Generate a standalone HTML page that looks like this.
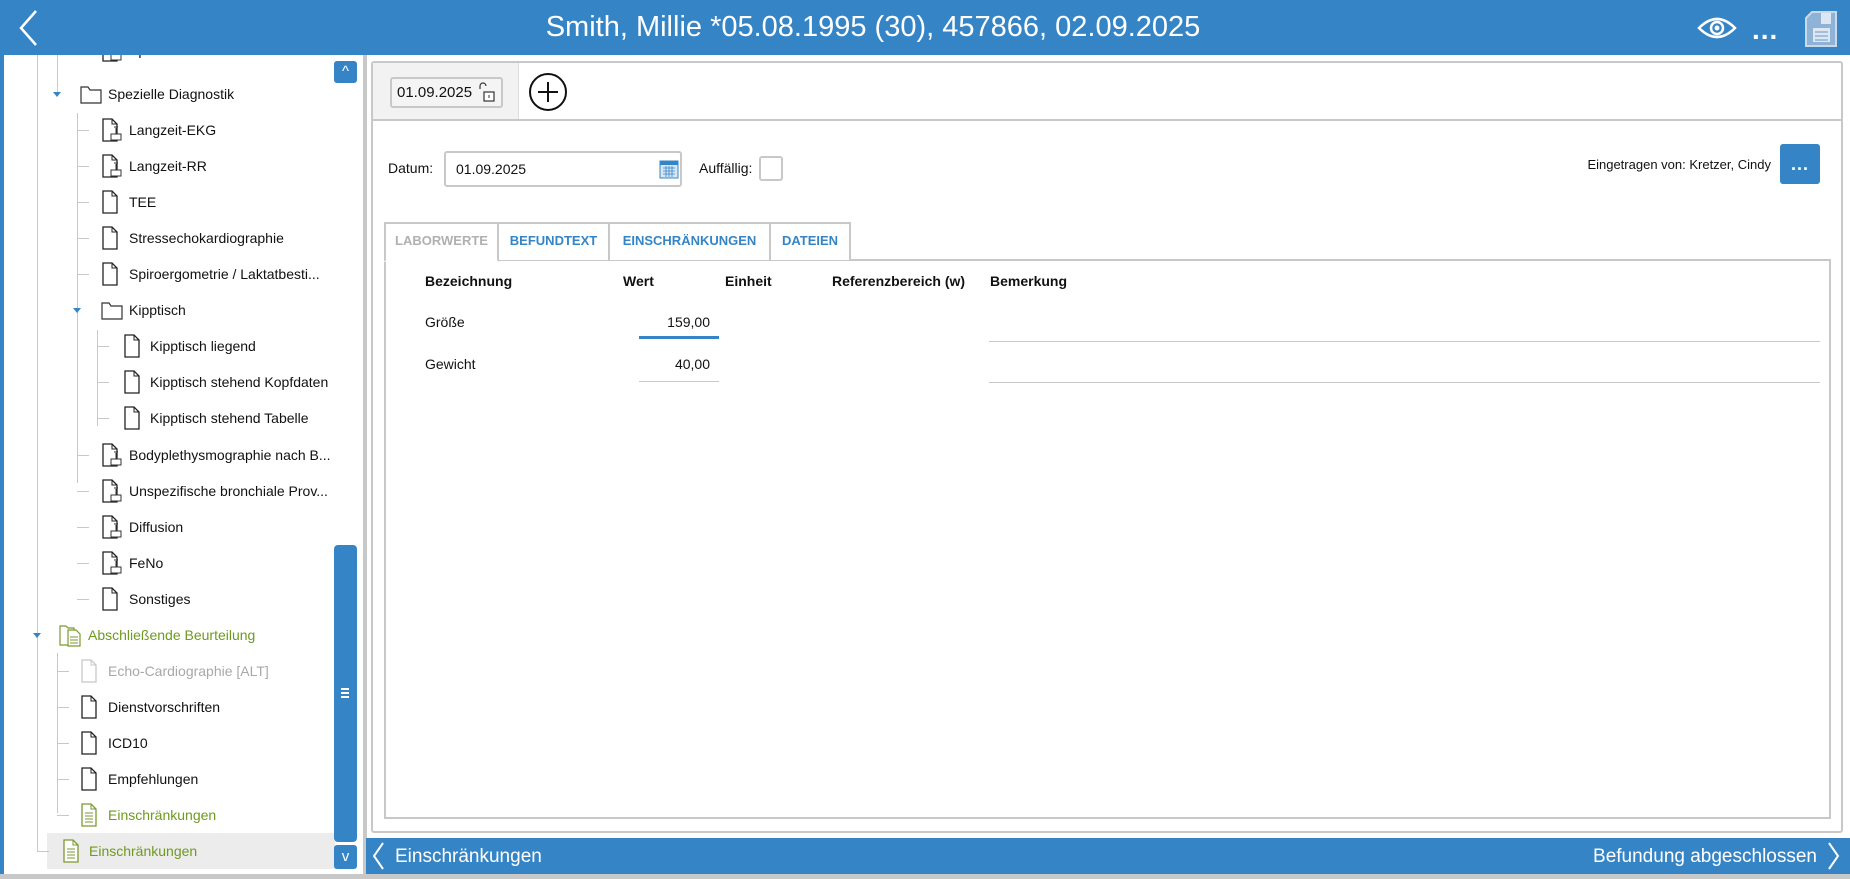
<!DOCTYPE html>
<html><head><meta charset="utf-8"><style>
*{margin:0;padding:0;box-sizing:border-box}
body{width:1850px;height:879px;overflow:hidden;background:#fff;font-family:"Liberation Sans",sans-serif;color:#111;position:relative}
.a{position:absolute}
.hdr{left:0;top:0;width:1850px;height:55px;background:#3585c6;z-index:5}
.title{left:0;width:1746px;top:8px;text-align:center;color:#fff;font-size:29px;line-height:38px;z-index:6}
.t{position:absolute;font-size:14px;line-height:18px;white-space:nowrap}
.ic{position:absolute}
.vl{position:absolute;width:1px;background:#c8c8c8}
.hl{position:absolute;height:1px;background:#c8c8c8;width:12px}
.arr{position:absolute;width:0;height:0;border-left:4px solid transparent;border-right:4px solid transparent;border-top:5px solid #3585c6}
.tab{position:absolute;top:222px;height:38px;border:2px solid #c8c8c8;border-bottom:none;font-size:13px;font-weight:bold;color:#3585c6;text-align:center;line-height:34px;background:#fff}
.th{position:absolute;top:273px;font-size:14px;font-weight:bold}
.z{z-index:6}
</style></head><body>
<div class="a hdr"></div>
<svg class="a z" style="left:16px;top:9px" width="24" height="38"><path d="M20 2 L5 19 L20 36" stroke="#fff" stroke-width="2.5" fill="none"/></svg>
<div class="a title">Smith, Millie *05.08.1995 (30), 457866, 02.09.2025</div>
<svg class="a z" style="left:1697px;top:16px" width="40" height="24"><path d="M2 12 Q20 -6 38 12 Q20 30 2 12Z" stroke="#fff" stroke-width="2.5" fill="none"/><circle cx="20" cy="12" r="6" stroke="#fff" stroke-width="2.5" fill="none"/><circle cx="20" cy="12" r="2.5" fill="#fff"/></svg>
<div class="a z" style="left:1752px;top:14px;color:#fff;font-size:28px;font-weight:bold;letter-spacing:1px">...</div>
<svg class="a z" style="left:1803px;top:10px" width="36" height="38"><path d="M3 8 L9 2 L33 2 L33 36 L3 36Z" fill="#8fb3d6" stroke="#c9d9ea" stroke-width="2"/><rect x="18" y="3" width="10" height="11" fill="#dce7f2"/><rect x="10" y="18" width="17" height="14" fill="#dce7f2"/><path d="M12 22h13M12 26h13M12 30h13" stroke="#8fb3d6" stroke-width="1.5"/></svg>

<!-- left panel -->
<div class="a" style="left:0;top:55px;width:4px;height:824px;background:#3585c6"></div>
<div class="a" style="left:363px;top:55px;width:4px;height:824px;background:#c8c8c8"></div>
<div class="a" style="left:0;top:874px;width:1850px;height:5px;background:#c8c8c8"></div>
<div class="a" style="left:47px;top:833px;width:288px;height:36px;background:#ececec"></div>

<div class="vl" style="left:37px;top:55px;height:796px"></div>
<div class="vl" style="left:57px;top:55px;height:40px"></div>
<div class="vl" style="left:77px;top:113px;height:370px"></div>
<div class="vl" style="left:97px;top:330px;height:96px"></div>
<div class="vl" style="left:57px;top:653px;height:160px"></div>

<div id="tree"></div>
<script>
var rows=[
[50,"Spirometrie",2,"m"],
[94,"Spezielle Diagnostik",1,"f",1],
[130,"Langzeit-EKG",2,"m"],
[166,"Langzeit-RR",2,"m"],
[202,"TEE",2,"p"],
[238,"Stressechokardiographie",2,"p"],
[274,"Spiroergometrie / Laktatbesti...",2,"p"],
[310,"Kipptisch",2,"f",1],
[346,"Kipptisch liegend",3,"p"],
[382,"Kipptisch stehend Kopfdaten",3,"p"],
[418,"Kipptisch stehend Tabelle",3,"p"],
[455,"Bodyplethysmographie nach B...",2,"m"],
[491,"Unspezifische bronchiale Prov...",2,"m"],
[527,"Diffusion",2,"m"],
[563,"FeNo",2,"m"],
[599,"Sonstiges",2,"p"],
[635,"Abschließende Beurteilung",0,"g",1],
[671,"Echo-Cardiographie [ALT]",1,"d"],
[707,"Dienstvorschriften",1,"p"],
[743,"ICD10",1,"p"],
[779,"Empfehlungen",1,"p"],
[815,"Einschränkungen",1,"e"],
[851,"Einschränkungen",0,"e2"]];
var iconX=[59,80,101,123],txtX=[88,108,129,150],lineX=[37,57,77,97];
var h="";
rows.forEach(function(r){
 var y=r[0],lv=r[2],k=r[3],ix=iconX[lv],tx=txtX[lv];
 if(k=="e2"){ix=62;tx=89;}
 var col="#111";
 if(k=="g"||k=="e"||k=="e2")col="#6e9a20";
 if(k=="d")col="#a8a8a8";
 if(r[4]){h+='<div class="arr" style="left:'+(lineX[lv]-4)+'px;top:'+(y-2)+'px"></div>';}
 else{h+='<div class="hl" style="left:'+lineX[lv]+'px;top:'+y+'px"></div>';}
 var s="";
 var st=(k=="d")?"#c8c8c8":(k=="e"||k=="e2"||k=="g")?"#7a9a30":"#222";
 if(k=="f"){s='<svg class="ic" style="left:'+ix+'px;top:'+(y-10)+'px" width="22" height="20"><path d="M1 3h7l2 3h11v13H1z" fill="#fff" stroke="#333" stroke-width="1.2"/></svg>';}
 else if(k=="g"){s='<svg class="ic" style="left:'+ix+'px;top:'+(y-12)+'px" width="24" height="24"><path d="M1 3h6l2 2h6v17H1z" fill="#fff" stroke="'+st+'" stroke-width="1.2"/><path d="M9 7h8l4 4v12H9z" fill="#fff" stroke="'+st+'" stroke-width="1.2"/><path d="M11 14h8M11 17h8M11 20h8" stroke="'+st+'"/></svg>';}
 else{
  s='<svg class="ic" style="left:'+ix+'px;top:'+(y-12)+'px" width="22" height="24"><path d="M2 1h9l5 5v17H2z" fill="#fff" stroke="'+st+'" stroke-width="1.3"/><path d="M11 1v5h5" fill="none" stroke="'+st+'" stroke-width="1"/>';
  if(k=="m")s+='<rect x="10" y="16" width="10" height="6" fill="#fff" stroke="#333"/><path d="M15 16v-6M13 9h4" stroke="#333"/>';
  if(k=="e"||k=="e2")s+='<path d="M5 10h8M5 13h8M5 16h8M5 19h8" stroke="'+st+'"/>';
  s+='</svg>';
 }
 h+=s+'<div class="t" style="left:'+tx+'px;top:'+(y-9)+'px;color:'+col+'">'+r[1]+'</div>';
});
document.getElementById("tree").innerHTML=h;
</script>

<!-- scrollbar -->
<div class="a" style="left:334px;top:61px;width:23px;height:22px;background:#3585c6;border-radius:3px;color:#fff;text-align:center;font-size:15px;line-height:22px">^</div>
<div class="a" style="left:334px;top:545px;width:23px;height:297px;background:#3585c6;border-radius:4px"></div>
<div class="a" style="left:341px;top:688px;width:8px;height:2px;background:#fff;box-shadow:0 4px #fff,0 8px #fff"></div>
<div class="a" style="left:334px;top:845px;width:23px;height:24px;background:#3585c6;border-radius:3px;color:#fff;text-align:center;font-size:15px;line-height:24px">v</div>

<!-- bottom bar -->
<div class="a" style="left:366px;top:838px;width:1484px;height:36px;background:#3585c6"></div>
<svg class="a" style="left:370px;top:840px" width="16" height="32"><path d="M13 3L4 16L13 29" stroke="#fff" stroke-width="2" fill="none"/></svg>
<div class="a" style="left:395px;top:846px;color:#fff;font-size:19px">Einschränkungen</div>
<div class="a" style="right:33px;top:846px;color:#fff;font-size:19px">Befundung abgeschlossen</div>
<svg class="a" style="left:1826px;top:840px" width="16" height="32"><path d="M3 3L12 16L3 29" stroke="#fff" stroke-width="2" fill="none"/></svg>

<!-- right content -->
<div class="a" style="left:371px;top:61px;width:1472px;height:772px;border:2px solid #c8c8c8;border-radius:3px"></div>
<div class="a" style="left:373px;top:63px;width:146px;height:56px;background:#f2f2f2;border-right:1px solid #ddd"></div>
<div class="a" style="left:373px;top:119px;width:1468px;height:2px;background:#c8c8c8"></div>
<div class="a" style="left:390px;top:77px;width:113px;height:31px;border:2px solid #c8c8c8;border-radius:3px;background:#f4f4f4;font-size:15px;line-height:27px;padding-left:5px">01.09.2025</div>
<svg class="a" style="left:477px;top:81px" width="20" height="22"><path d="M3 8V5a3 3 0 0 1 6 0" stroke="#333" fill="none" stroke-width="1.2"/><rect x="7" y="11" width="10" height="9" fill="#fff" stroke="#333" stroke-width="1.2"/><path d="M12 14v3" stroke="#333"/></svg>
<svg class="a" style="left:528px;top:72px" width="40" height="40"><circle cx="20" cy="20" r="18" stroke="#111" stroke-width="2" fill="#fff"/><path d="M20 10v20M10 20h20" stroke="#111" stroke-width="2"/></svg>

<div class="t" style="left:388px;top:159px">Datum:</div>
<div class="a" style="left:444px;top:151px;width:238px;height:36px;border:2px solid #c8c8c8;border-radius:3px;font-size:14px;line-height:32px;padding-left:10px">01.09.2025</div>
<svg class="a" style="left:659px;top:158px" width="20" height="21"><rect x="1" y="3" width="18" height="17" fill="#d6e6f5" stroke="#3585c6"/><rect x="1" y="3" width="18" height="4" fill="#3585c6"/><path d="M4 10h12M4 13h12M4 16h12M7 8v11M10 8v11M13 8v11" stroke="#3585c6" stroke-width=".8"/></svg>
<div class="t" style="left:699px;top:159px">Auffällig:</div>
<div class="a" style="left:759px;top:156px;width:24px;height:25px;border:2px solid #c8c8c8;border-radius:3px"></div>
<div class="t" style="right:79px;top:156px;font-size:13px">Eingetragen von: Kretzer, Cindy</div>
<div class="a" style="left:1780px;top:144px;width:40px;height:40px;background:#3585c6;border-radius:3px;color:#fff;font-weight:bold;font-size:18px;text-align:center;line-height:40px;letter-spacing:1px">...</div>

<div class="a" style="left:384px;top:259px;width:1447px;height:560px;border:2px solid #c8c8c8"></div>
<div class="tab" style="left:384px;width:115px;color:#b0b0b0;border-bottom:2px solid #fff;height:40px">LABORWERTE</div>
<div class="tab" style="left:497px;width:113px">BEFUNDTEXT</div>
<div class="tab" style="left:608px;width:163px">EINSCHRÄNKUNGEN</div>
<div class="tab" style="left:769px;width:82px">DATEIEN</div>

<div class="th" style="left:425px">Bezeichnung</div>
<div class="th" style="left:623px">Wert</div>
<div class="th" style="left:725px">Einheit</div>
<div class="th" style="left:832px">Referenzbereich (w)</div>
<div class="th" style="left:990px">Bemerkung</div>
<div class="t" style="left:425px;top:313px">Größe</div>
<div class="t" style="left:639px;width:71px;text-align:right;top:313px">159,00</div>
<div class="a" style="left:639px;top:336px;width:80px;height:3px;background:#3585c6"></div>
<div class="t" style="left:425px;top:355px">Gewicht</div>
<div class="t" style="left:639px;width:71px;text-align:right;top:355px">40,00</div>
<div class="a" style="left:639px;top:381px;width:80px;height:1px;background:#c8c8c8"></div>
<div class="a" style="left:989px;top:341px;width:831px;height:1px;background:#c8c8c8"></div>
<div class="a" style="left:989px;top:382px;width:831px;height:1px;background:#c8c8c8"></div>
</body></html>
